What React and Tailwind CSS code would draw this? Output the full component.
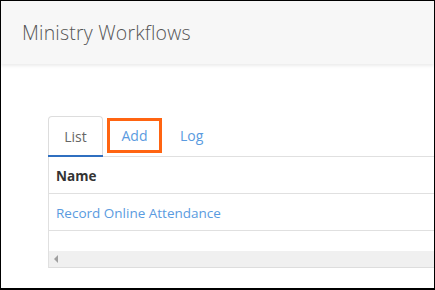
import React from "react";

const rows = [{ name: "Record Online Attendance" }];

const App = () => {
  return (
    <div className="w-[435px] h-[290px] overflow-hidden bg-white border-t border-l border-r border-b-2 border-black font-['Open_Sans',sans-serif]">
      {/* Page header */}
      <div className="h-[63px] bg-[#f7f7f7] shadow-[0_2px_3px_rgba(0,0,0,0.08)] flex items-center pl-[21px] relative z-10">
        <h1 className="text-[19.5px] font-light text-[#555] tracking-[0.2px]">
          Ministry Workflows
        </h1>
      </div>

      <div className="pl-[47px] pt-[52px]">
        {/* Tabs */}
        <div className="flex items-end h-[41px] border-b border-[#e0e0e0]">
          <div className="w-[55px] h-[41px] -mb-px border border-b-0 border-[#ddd] rounded-t-[4px] flex items-center justify-center relative bg-white">
            <span className="text-[14px] text-[#666] pb-px">List</span>
            <div className="absolute left-[-1px] right-[-1px] bottom-0 h-[2px] bg-[#2f6fc0]" />
          </div>
          <div className="ml-[4px] mb-[3px] w-[55px] h-[35px] border-[3px] border-[#ff6411] flex items-center justify-center">
            <span className="text-[14px] text-[#5a9be0]">Add</span>
          </div>
          <div className="ml-[18px] h-[41px] flex items-center">
            <span className="text-[14px] text-[#5a9be0] pb-px">Log</span>
          </div>
        </div>

        {/* Grid */}
        <div className="border-l border-[#e0e0e0]">
          <div className="h-[37px] border-b border-[#e0e0e0] flex items-center pl-[7px] pt-[2px]">
            <span className="text-[13.5px] font-bold text-[#333]">Name</span>
          </div>
          {rows.map((row) => (
            <div
              key={row.name}
              className="h-[37px] border-b border-[#e0e0e0] flex items-center pl-[7px] pt-[2px]"
            >
              <span className="text-[13.5px] text-[#5a9be0]">{row.name}</span>
            </div>
          ))}
          <div className="h-[20px]" />
          <div className="h-[17px] bg-[#f0f0f0] border-b border-[#ddd] flex items-center pl-[4px]">
            <svg width="6" height="8" viewBox="0 0 6 8">
              <path d="M5 0 L1 4 L5 8 Z" fill="#a0a0a0" />
            </svg>
          </div>
        </div>
      </div>
    </div>
  );
};

export default App;
